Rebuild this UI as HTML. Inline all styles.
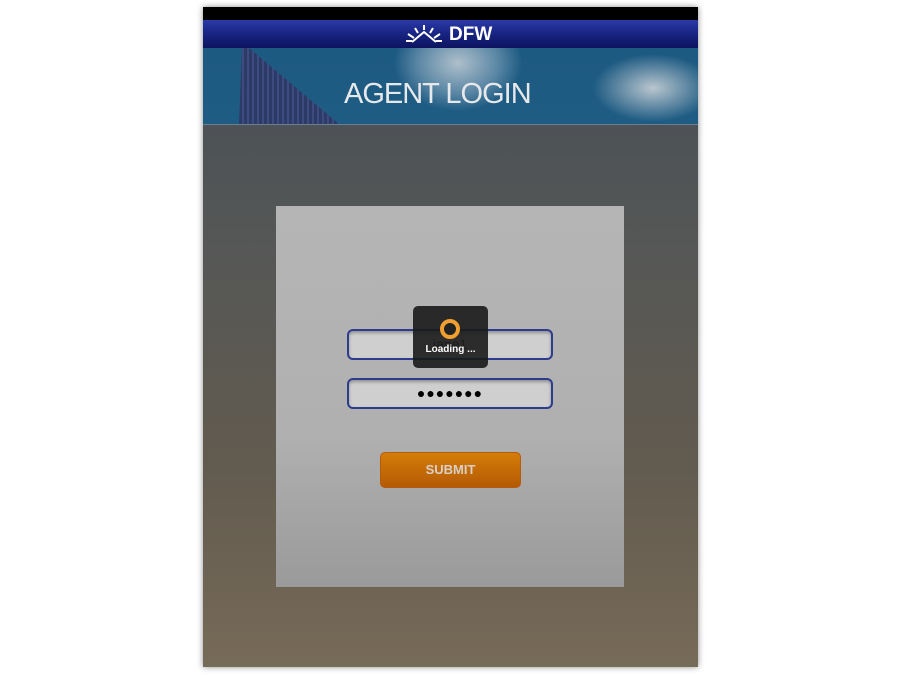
<!DOCTYPE html>
<html><head><style>
body{margin:0;width:900px;height:675px;background:#fff;position:relative;overflow:hidden;font-family:"Liberation Sans",sans-serif}
.f{position:absolute;left:203px;top:7px;width:495px;height:660px;box-shadow:0 0 6px rgba(0,0,0,.45);background:linear-gradient(#454d57,#555756 35%,#625b4f 70%,#776a58)}
.top{position:absolute;left:0;top:0;width:495px;height:13px;background:#000}
.hd{position:absolute;left:0;top:13px;width:495px;height:28px;background:linear-gradient(#2a3aa8,#15207a 60%,#0d1560)}
.hd span{position:absolute;left:246px;top:4px;color:#fff;font-weight:bold;font-size:19px}
.bn{position:absolute;left:0;top:41px;width:495px;height:76px;background:radial-gradient(ellipse 80px 60px at 255px 15px,#aebfcb,#5b87a5 50%,transparent 80%),radial-gradient(ellipse 80px 45px at 450px 40px,#b9c6cf,transparent 75%),linear-gradient(#1d5a82,#1f5c83);border-bottom:1px solid #6a8090}
.sp{position:absolute;left:36px;top:0;width:100px;height:76px;background:repeating-linear-gradient(90deg,#2c3a66 0 3px,#3d4b80 3px 5px);clip-path:polygon(3px 0,10px 0,100px 76px,0 76px)}
.bn b{position:absolute;left:141px;top:30px;color:#e6e8ea;font-weight:normal;font-size:29px;letter-spacing:-1px}
.p{position:absolute;left:73px;top:199px;width:348px;height:381px;background:linear-gradient(#b5b5b5,#b0b0b0 60%,#9a9a9a)}
.in{position:absolute;left:71px;width:202px;height:27px;border:2px solid #2d3c8c;border-radius:6px;background:#cfcfcf;box-shadow:inset 0 2px 3px rgba(0,0,0,.3)}
.btn{position:absolute;left:104px;top:246px;width:139px;height:34px;border:1px solid #b65a10;border-radius:5px;background:linear-gradient(#d47d08,#b45a05);color:#d8d0c8;font-weight:bold;font-size:13px;text-align:center;line-height:34px}
.ld{position:absolute;left:210px;top:299px;width:75px;height:62px;border-radius:5px;background:rgba(25,25,25,.9);color:#fff;font-weight:bold;font-size:10px;text-align:center}
.ring{position:absolute;left:27px;top:13px;border:4px solid #f0a030;border-radius:50%;background:#222;width:12px;height:12px}
</style></head><body>
<div class="f">
<div class="top"></div>
<div class="hd">
<svg style="position:absolute;left:202px;top:4px" width="38" height="20" viewBox="0 0 38 20"><g stroke="#fff" stroke-width="2" fill="none"><path d="M7 18 L19 8 L31 18"/><path d="M19 1v5M10 4l3 5M28 4l-3 5M3 10l6 4M35 10l-6 4M1 17h6M31 17h6"/></g></svg>
<span>DFW</span></div>
<div class="bn"><div class="sp"></div><b>AGENT LOGIN</b></div>
<div class="p">
<div class="in" style="top:123px;text-align:center;line-height:27px;font-size:14px;color:#333">jane1</div>
<div class="in" style="top:172px;text-align:center;line-height:27px;font-size:14px;letter-spacing:1px;color:#000">●●●●●●●</div>
<div class="btn">SUBMIT</div>
</div>
<div class="ld"><div class="ring"></div><div style="position:absolute;top:38px;width:75px">Loading ...</div></div>
</div>
</body></html>
